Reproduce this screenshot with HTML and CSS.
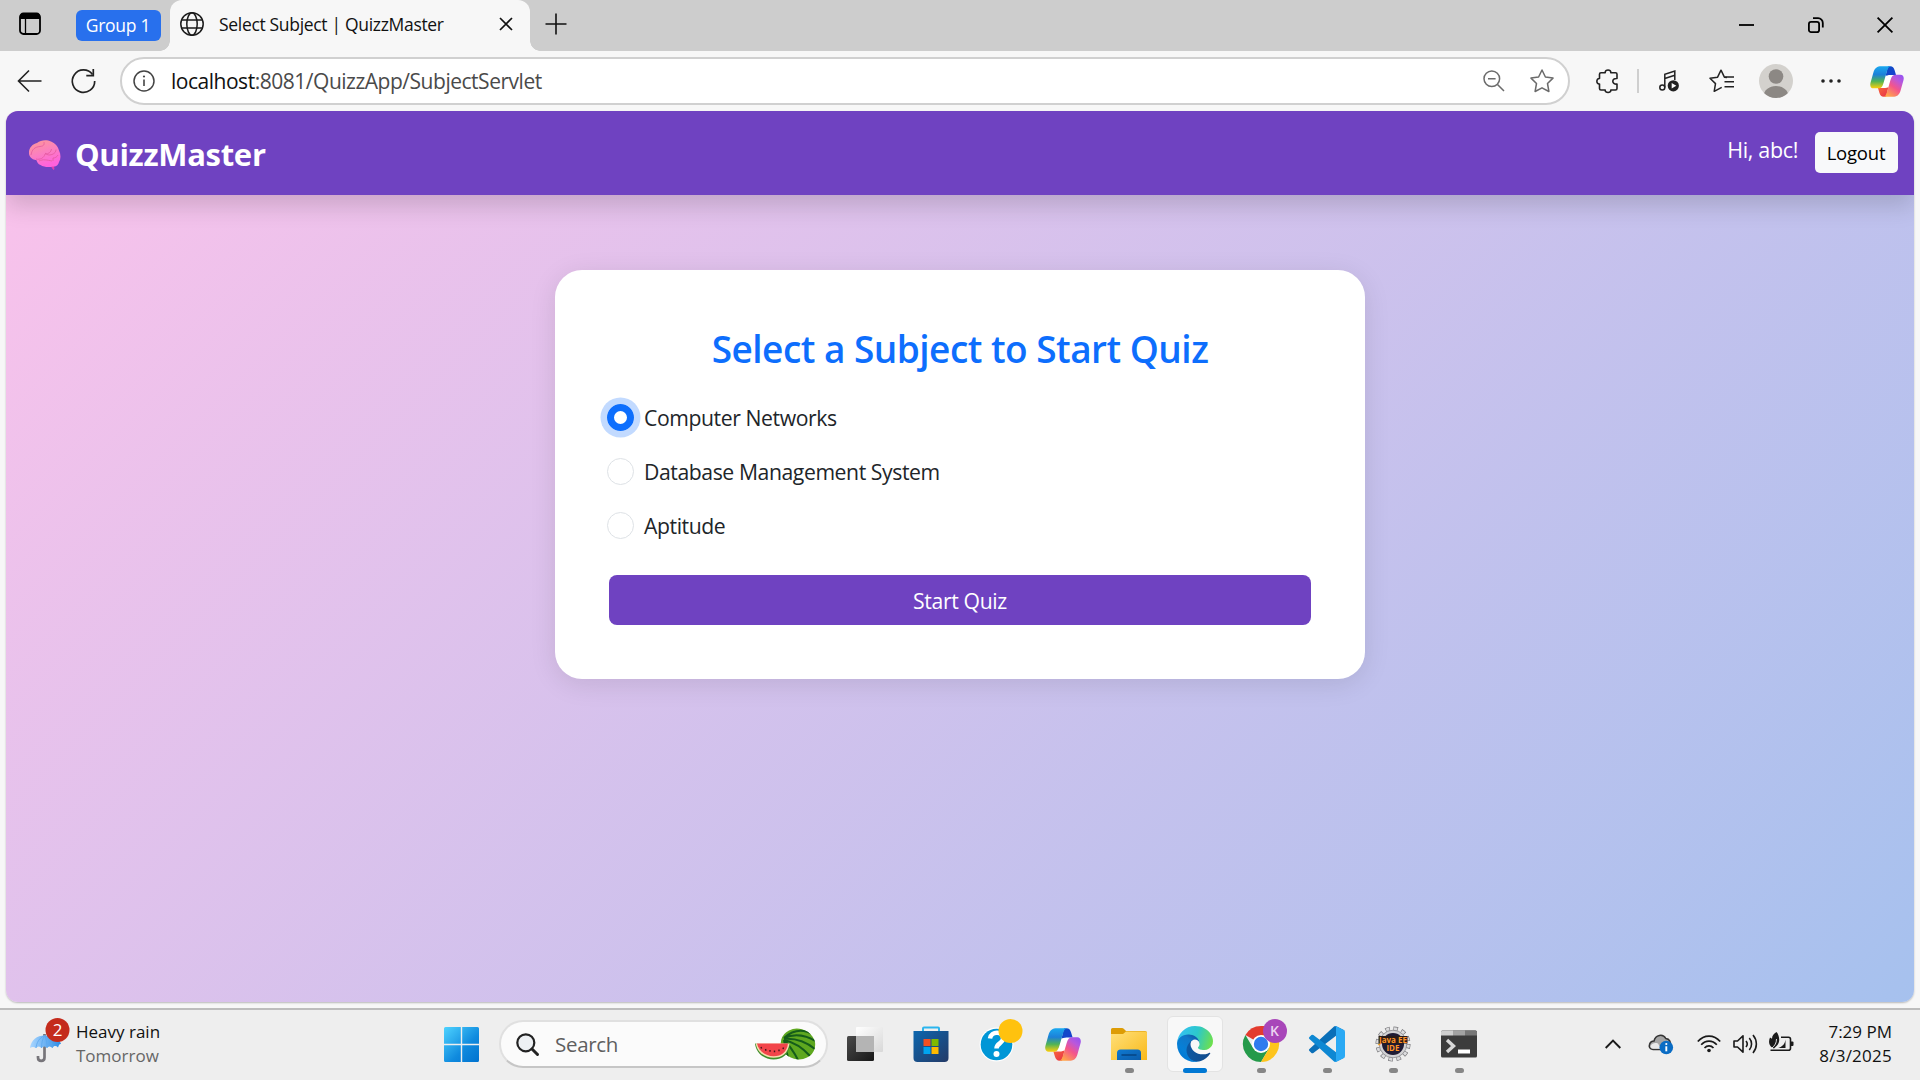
FILE: index.html
```html
<!DOCTYPE html>
<html lang="en">
<head>
<meta charset="utf-8">
<title>Select Subject | QuizzMaster</title>
<link rel="stylesheet" href="styles.css">
</head>
<body>
<svg class="defs" width="0" height="0" aria-hidden="true">
  <defs>
    <linearGradient id="cpA" x1="0" y1="0" x2="0" y2="1"><stop offset="0" stop-color="#1aa9f0"/><stop offset=".38" stop-color="#1d80d8"/><stop offset=".68" stop-color="#4fb356"/><stop offset="1" stop-color="#ffcf0a"/></linearGradient>
    <linearGradient id="cpB" x1="1" y1="0" x2=".3" y2="1"><stop offset="0" stop-color="#8e52f5"/><stop offset=".3" stop-color="#b858dd"/><stop offset=".6" stop-color="#f4558b"/><stop offset="1" stop-color="#ffa64a"/></linearGradient>
    <linearGradient id="cpC" x1="0" y1="0" x2="1" y2="1"><stop offset="0" stop-color="#0b4fc4"/><stop offset="1" stop-color="#1b3fd0"/></linearGradient>
    <linearGradient id="cpD" x1="0" y1="0" x2="1" y2="1"><stop offset="0" stop-color="#f8683c"/><stop offset="1" stop-color="#e8304a"/></linearGradient>
  </defs>
  <symbol id="copilot" viewBox="0 0 36 33">
    <path fill="#fff" d="M17 9h7l-5 15h-7z"/>
    <path fill="url(#cpC)" d="M19 .2h2.500c2.500 0 3.800 1.600 4.600 4.200L27.600 9.500H23c-2 0-4 0-6.500 1z"/>
    <path fill="url(#cpD)" d="M17 32.800h-2.500c-2.500 0-3.800-1.600-4.600-4.200L8.400 23.500H13c2 0 4 0 6.500-1z"/>
    <path fill="url(#cpA)" d="M12 .2h10.200c-2.400.3-3.300 2-4.200 5.200L14.300 18c-1.200 4-2.600 5.800-6 5.800H3.800C.6 23.800-.3 21 .4 18L3.600 6.600C5 2 7.500.2 12 .2z"/>
    <path fill="url(#cpB)" d="M24 32.800H13.800c2.400-.3 3.300-2 4.200-5.200L21.700 15c1.200-4 2.600-5.800 6-5.800h4.500c3.200 0 4.100 2.800 3.400 5.800l-3.200 11.400C31 31 28.500 32.800 24 32.800z"/>
  </symbol>
</svg>

<header class="tabstrip">
  <svg class="ic-workspace" width="22" height="24" viewBox="0 0 22 24"><rect x="1" y="1.500" width="20" height="20.500" rx="3.500" fill="none" stroke="#000" stroke-width="1.800"/><path d="M1 7V5a4 4 0 0 1 4-4h12a4 4 0 0 1 4 4v2z"/><path d="M6.500 7v15" stroke="#000" stroke-width="1.300"/></svg>
  <span class="group">Group 1</span>
  <div class="tab">
    <svg width="24" height="26" viewBox="0 0 24 26" fill="none" stroke="#1b1b1b" stroke-width="1.500"><circle cx="12" cy="13" r="11.200"/><ellipse cx="12" cy="13" rx="5.200" ry="11.200"/><path d="M1.800 9h20.400M1.800 17h20.400"/></svg>
    <span class="tab-title">Select Subject | QuizzMaster</span>
    <svg width="14" height="14" viewBox="0 0 14 14" stroke="#111" stroke-width="1.700"><path d="M1 1l12 12M13 1L1 13"/></svg>
  </div>
  <svg class="ic-plus" width="22" height="22" viewBox="0 0 22 22" stroke="#111" stroke-width="1.600"><path d="M11 .5v21M.5 11h21"/></svg>
  <div class="winctl">
    <svg width="15" height="16" viewBox="0 0 15 16"><path d="M0 8h15" stroke="#000" stroke-width="1.800"/></svg>
    <svg width="16" height="16" viewBox="0 0 16 16" fill="none" stroke="#000" stroke-width="1.800"><rect x=".9" y="4.900" width="10.200" height="10.200" rx="2.200"/><path d="M5 1.200h5A4.700 4.700 0 0 1 14.800 6v4.500"/></svg>
    <svg width="16" height="16" viewBox="0 0 16 16" stroke="#000" stroke-width="1.800"><path d="M.6.600l14.800 14.800M15.400.600L.6 15.400"/></svg>
  </div>
</header>

<nav class="toolbar">
  <svg class="ic-back" width="25" height="24" viewBox="0 0 25 24" fill="none" stroke="#222" stroke-width="1.600"><path d="M12 1.500L1.500 12 12 22.500M1.500 12H24.500"/></svg>
  <svg class="ic-reload" width="25" height="26" viewBox="0 0 25 26" fill="none" stroke="#222" stroke-width="1.700"><path d="M21.500 6.500A11.200 11.200 0 1 0 23.700 13"/><path d="M22.300 1v6.700h-7"/></svg>
  <div class="address">
    <svg class="ic-info" width="22" height="22" viewBox="0 0 22 22"><circle cx="11" cy="11" r="10" fill="none" stroke="#444" stroke-width="1.500"/><path d="M11 9.500v6.500" stroke="#444" stroke-width="1.600"/><circle cx="11" cy="6.500" r="1.100" fill="#444"/></svg>
    <span class="url"><b>localhost</b>:8081/QuizzApp/SubjectServlet</span>
    <svg class="ic-zoom" width="22" height="22" viewBox="0 0 22 22" fill="none" stroke="#6b6b6b" stroke-width="1.500"><circle cx="8.800" cy="8.800" r="7.800"/><path d="M14.500 14.500l6.500 6.500M5 8.800h7.600"/></svg>
    <svg class="ic-star" width="24" height="24" viewBox="0 0 24 24" fill="none" stroke="#6b6b6b" stroke-width="1.500" stroke-linejoin="round"><path d="M12 1l3.400 7 7.600 1.100-5.500 5.400 1.400 8-6.900-3.700-6.900 3.700 1.400-8L1 9.100 8.600 8z"/></svg>
  </div>
  <svg class="ic-puzzle" width="23" height="24" viewBox="0 0 23 24" fill="none" stroke="#222" stroke-width="1.600" stroke-linejoin="round"><path d="M5 3.800h4.200C8.800.1 15.300.1 14.800 3.800h4.700q1.500 0 1.500 1.500v4.200c-5.600-.6-5.600 6.200 0 5.600v4.400q0 1.500-1.500 1.500h-4.700c.5 3.300-6 3.300-5.600 0H5q-1.500 0-1.500-1.500v-4.400c-3.500.4-3.500-6 0-5.600V5.300q0-1.500 1.500-1.500z"/></svg>
  <span class="sep"></span>
  <svg class="ic-music" width="20" height="22" viewBox="0 0 20 22" fill="none" stroke="#222" stroke-width="1.500"><circle cx="3.300" cy="17.500" r="2.500"/><path d="M5.800 17.500V4.200l10-3.200v9M5.800 8.500l10-3.200"/><circle cx="14.300" cy="15.800" r="5.600" fill="#222" stroke="none"/><path d="M12.700 13v5.600l4.600-2.800z" fill="#fff" stroke="none"/></svg>
  <svg class="ic-favs" width="25" height="24" viewBox="0 0 25 24" fill="none" stroke="#222" stroke-width="1.500" stroke-linejoin="round"><path d="M18 8.500l-2.600-.3L12 1.200 8.600 8.200 1 9.300l5.500 5.300-1.300 7.700 7.500-4"/><path d="M15.500 12.700H25M15.500 17.700H25M16 7.900H25"/></svg>
  <svg class="ic-avatar" width="34" height="34" viewBox="0 0 34 34"><clipPath id="av"><circle cx="17" cy="17" r="17"/></clipPath><circle cx="17" cy="17" r="17" fill="#d3d1cd"/><circle cx="17" cy="12.500" r="7.300" fill="#8c8884"/><ellipse cx="17" cy="32.500" rx="12.500" ry="10.500" fill="#8c8884" clip-path="url(#av)"/></svg>
  <svg class="ic-dots" width="20" height="6" viewBox="0 0 20 6" fill="#222"><circle cx="2" cy="3" r="1.800"/><circle cx="10" cy="3" r="1.800"/><circle cx="18" cy="3" r="1.800"/></svg>
  <svg class="ic-copilot" width="34" height="31"><use href="#copilot"/></svg>
</nav>

<div class="viewport">
  <main class="page">
    <div class="navbar">
      <svg class="brain" width="34" height="30" viewBox="0 0 34 30">
        <defs><linearGradient id="br" x1="0" y1="0" x2=".4" y2="1"><stop offset="0" stop-color="#ff9a94"/><stop offset=".55" stop-color="#fb7fc0"/><stop offset="1" stop-color="#ff62dc"/></linearGradient></defs>
        <path d="M22 24c1 2 1.500 4 3.500 6l1-1c-.5-2-.3-3 .5-4.500z" fill="#e03fb0"/>
        <path d="M9 3C13-.3 19-.3 23 1.500c4 1.500 7 5 8 9 2 4 2 8.500 0 11.500-.5 3-3 5-6 4.500-4 1-9 .8-12.500-1.500-2.500-1-3.500-3-4-4.800C3 19.500.5 16 1 11.500 1.500 7.500 4.500 4 9 3z" fill="url(#br)"/>
        <path d="M3 15c1-6 4-8 9-8.500s4-3 4-4.500M8 19c4 1 8-1 9-5 4 0 6-2 6.500-5M17 13c2 2 4 2.500 7 1.500s4-3 4-5M11 21c4-2 8-1 13 0M25 21v-3c2 0 4-1 5-3" fill="none" stroke="#e3589c" stroke-width="1" opacity=".75"/>
      </svg>
      <span class="brand">QuizzMaster</span>
      <span class="hello">Hi, abc!</span>
      <button class="logout">Logout</button>
    </div>
    <form class="card">
      <h3>Select a Subject to Start Quiz</h3>
      <label class="option"><i class="radio on"></i>Computer Networks</label>
      <label class="option"><i class="radio"></i>Database Management System</label>
      <label class="option"><i class="radio"></i>Aptitude</label>
      <button class="start" type="button">Start Quiz</button>
    </form>
  </main>
</div>

<footer class="taskbar">
  <div class="weather">
    <svg width="42" height="46" viewBox="0 0 42 46">
      <defs><linearGradient id="um" x1="0" y1="0" x2="1" y2="0"><stop offset="0" stop-color="#a9d6ff"/><stop offset="1" stop-color="#2b8ce6"/></linearGradient></defs>
      <path d="M16.500 16v3M16.500 28v11.500c0 4.500-6.500 4.500-6.500 0v-1.500" fill="none" stroke="#77757a" stroke-width="2.700"/>
      <path d="M2 30C3 22 9 17.500 16.500 17.500S32 21 33 26c-1.300-.5-2 .5-3 3.500-2-2-4-2-5.500.5-2-2-4-2-5.500 0-1.700-2-3.600-2-5.500 0-1.800-2-3.800-2-5.500 0C6 28.500 4 28.500 2 30z" fill="url(#um)"/>
      <path d="M8 30c.5-5 3-10 8.500-12.500M13.500 30c0-5 1-9 3-12.500M19 30c0-5-.5-9-2.500-12.500M24.500 30c-.5-5-2.500-10-8-12.500" fill="none" stroke="#5aa6ee" stroke-width=".8"/>
      <circle cx="29.500" cy="12" r="12" fill="#c42b1c"/>
      <text x="29.500" y="18" text-anchor="middle" fill="#fff" class="badge-num">2</text>
    </svg>
    <div class="weather-text"><span>Heavy rain</span><span class="dim">Tomorrow</span></div>
  </div>

  <svg class="winlogo" width="35" height="35" viewBox="0 0 35 35">
    <defs><linearGradient id="wl" x1="0" y1="0" x2="1" y2="1" gradientUnits="userSpaceOnUse" gradientTransform="scale(35)"><stop offset="0" stop-color="#4ed3ff"/><stop offset=".6" stop-color="#0f8ade"/><stop offset="1" stop-color="#0072cf"/></linearGradient></defs>
    <path fill="url(#wl)" d="M1.500 0H16.800V16.800H0V1.500Q0 0 1.500 0zM18.200 0h15.300Q35 0 35 1.500V16.800H18.200zM0 18.200H16.800V35H1.500Q0 35 0 33.500zM18.200 18.200H35V33.500Q35 35 33.500 35H18.200z"/>
  </svg>

  <div class="search">
    <svg width="23" height="23" viewBox="0 0 23 23"><circle cx="9.800" cy="9.800" r="8.500" fill="#eef1f4" stroke="#222" stroke-width="2.200"/><path d="M16 16l5.500 5.500" stroke="#222" stroke-width="3" stroke-linecap="round"/></svg>
    <span class="search-text">Search</span>
    <svg class="melon" width="61" height="32" viewBox="0 0 61 32">
      <defs><clipPath id="ml"><ellipse cx="43" cy="16" rx="17.300" ry="15.300" transform="rotate(15 43 16)"/></clipPath></defs>
      <g clip-path="url(#ml)"><rect width="61" height="32" fill="#5ea81f"/><path d="M29 10c10-9 20-9 30-3M29 10c11-5 22-3 33 4M29 11c12-1 22 3 31 10M29 12c9 2 18 7 26 16M29 12c5 5 9 10 14 20M29 12c1 6 2 12 5 20" fill="none" stroke="#155d1a" stroke-width="2"/></g>
      <path d="M0 15.500c7 1.500 27 1.500 35 1C34 26 28 31.500 18.500 31.500S1 25 0 15.500z" fill="#3f8f2c"/>
      <path d="M.8 15.500h33.800C33 25 27.500 29.800 18.500 29.800S2 24 .8 15.500z" fill="#f6dcae"/>
      <path d="M2 15.500h31C32 24 26.500 28.200 18.500 28.200S3.500 23 2 15.500z" fill="#f2444a"/>
      <path d="M6 19l.6 1.500M10.500 21l.5 1.700M15 22v1.800M19.500 22.500v1.800M24 21.500v1.700M28.500 19.500l-.5 1.600" stroke="#43161a" stroke-width="1.400"/>
    </svg>
  </div>

  <div class="apps">
    <div class="app">
      <svg width="36" height="36" viewBox="0 0 36 36"><defs><linearGradient id="tv" x1="0" y1="0" x2="1" y2="1"><stop offset="0" stop-color="#4a4a4a"/><stop offset="1" stop-color="#181818"/></linearGradient><linearGradient id="tw" x1="0" y1="0" x2="1" y2="1"><stop offset="0" stop-color="#fff"/><stop offset="1" stop-color="#d8d8d8"/></linearGradient></defs><rect y="10" width="27" height="25" rx="1.500" fill="url(#tv)"/><rect x="9" y="1" width="27" height="25" rx="1" fill="url(#tw)"/><path d="M9 10h18v16H9z" fill="#b4b4b4"/></svg>
    </div>
    <div class="app">
      <svg width="36" height="36" viewBox="0 0 36 36"><defs><linearGradient id="st" x1="0" y1="0" x2="1" y2="1"><stop offset="0" stop-color="#0c66ae"/><stop offset="1" stop-color="#243a67"/></linearGradient></defs><path d="M10 6V2.500Q10 1.500 11 1.500H25Q26 1.500 26 2.500V6" fill="none" stroke="#2bb5ee" stroke-width="2"/><path d="M.5 5H35.500V32Q35.500 36 31.500 36H4.500Q.5 36 .5 32z" fill="url(#st)"/><path d="M10.500 13h7v7h-7z" fill="#f25022"/><path d="M18.500 13h7v7h-7z" fill="#7fba00"/><path d="M10.500 21h7v7h-7z" fill="#00a4ef"/><path d="M18.500 21h7v7h-7z" fill="#ffb900"/></svg>
    </div>
    <div class="app">
      <svg class="tall" width="44" height="44" viewBox="0 0 44 44"><circle cx="17.500" cy="26.500" r="17" fill="#fff"/><circle cx="17.500" cy="26.500" r="15.800" fill="#0096d6"/><path d="M11 20.500c1-8 14-7.500 13 .5-.6 4.500-6.500 4.500-6.500 9.500" fill="none" stroke="#fff" stroke-width="4.500"/><circle cx="17.500" cy="36" r="3" fill="#fff"/><circle cx="31.500" cy="13" r="12" fill="#ffc20e"/></svg>
    </div>
    <div class="app"><svg width="36" height="33"><use href="#copilot"/></svg></div>
    <div class="app open">
      <svg width="36" height="34" viewBox="0 0 36 34"><defs><linearGradient id="fo" x1="0" y1="0" x2="1" y2="1"><stop offset="0" stop-color="#ffe07a"/><stop offset="1" stop-color="#f9b91a"/></linearGradient><linearGradient id="fb" x1="0" y1="0" x2="1" y2="1"><stop offset="0" stop-color="#0f7ad1"/><stop offset="1" stop-color="#0b5cab"/></linearGradient></defs><path d="M0 8V2.500Q0 1 1.500 1H11q1 0 2 1l2 2H34q2 0 2 2v2z" fill="#dd9c05"/><path d="M0 7H12l3-2.500H34.500Q36 4.500 36 6V33H0z" fill="url(#fo)"/><path d="M6 33V26q0-3.500 3.500-3.500h17Q30 22.500 30 26v7z" fill="url(#fb)"/><path d="M10.500 28h15" stroke="#07488a" stroke-width="1.700"/></svg>
    </div>
    <div class="app open active">
      <svg width="36" height="36" viewBox="4.630 4.920 256 256">
        <defs><linearGradient id="e1" x1="63" y1="177" x2="241" y2="177" gradientUnits="userSpaceOnUse"><stop offset="0" stop-color="#0c59a4"/><stop offset="1" stop-color="#114a8b"/></linearGradient>
        <linearGradient id="e2" x1="157" y1="90" x2="46" y2="240" gradientUnits="userSpaceOnUse"><stop offset="0" stop-color="#0f5aa8"/><stop offset=".25" stop-color="#1177c8"/><stop offset=".7" stop-color="#0680d7"/><stop offset="1" stop-color="#0078d4"/></linearGradient>
        <linearGradient id="e3" x1="20" y1="60" x2="255" y2="130" gradientUnits="userSpaceOnUse"><stop offset="0" stop-color="#35c1f1"/><stop offset=".5" stop-color="#2cc8cb"/><stop offset="1" stop-color="#6fe04a"/></linearGradient></defs>
        <path fill="url(#e1)" d="M235.680 195.460a93.730 93.730 0 0 1-10.540 4.710 101.870 101.870 0 0 1-35.900 6.460c-47.320 0-88.540-32.550-88.540-74.320A31.480 31.480 0 0 1 117.130 105c-42.800 1.800-53.800 46.400-53.800 72.530 0 73.880 68.090 81.370 82.760 81.370 7.910 0 19.840-2.300 27-4.560l1.310-.44A128.340 128.340 0 0 0 241 201.100a4 4 0 0 0-5.320-5.640z"/>
        <path fill="url(#e2)" d="M110.340 246.340A79.200 79.200 0 0 1 87.600 225a80.720 80.720 0 0 1 29.530-120c3.120-1.470 8.450-4.130 15.540-4a32.350 32.350 0 0 1 25.690 13 31.880 31.880 0 0 1 6.360 18.660c0-.21 24.460-79.600-80-79.600-43.900 0-80 41.660-80 78.210a130.150 130.150 0 0 0 12.110 56 128 128 0 0 0 156.380 67.110 75.550 75.550 0 0 1-62.870-8.040z"/>
        <path fill="url(#e3)" d="M156.940 153.780c-.81 1.050-3.300 2.500-3.300 5.660 0 2.610 1.700 5.120 4.720 7.230 14.380 10 41.490 8.680 41.560 8.680A59.560 59.560 0 0 0 230.190 167a61.380 61.380 0 0 0 30.430-52.880c.26-22.410-8-37.310-11.340-43.910C228.100 28.760 182.350 4.920 132.610 4.920A128 128 0 0 0 4.630 131.120c.48-36.540 36.800-66.050 80-66.050 3.500 0 23.460.34 42 10.070 16.340 8.580 24.900 18.940 30.850 29.210 6.180 10.670 7.280 24.150 7.280 29.520s-2.740 13.330-7.820 19.910z"/>
      </svg>
    </div>
    <div class="app open">
      <svg class="tall" width="44" height="44" viewBox="0 0 44 44">
        <path d="M18 26L2.400 17A18 18 0 0 1 33.600 17z" fill="#e33b2e"/><path d="M18 8a18 18 0 0 1 15.600 9H18z" fill="#e33b2e"/>
        <path d="M18 26l8 4.500L18 44A18 18 0 0 1 2.400 17l8 13.500z" fill="#249a4a"/>
        <path d="M18 17h15.600A18 18 0 0 1 18 44l8-13.500z" fill="#fdc41d"/>
        <circle cx="18" cy="26" r="9" fill="#fff"/><circle cx="18" cy="26" r="7.200" fill="#2f7bee"/>
        <circle cx="32" cy="13" r="12" fill="#a846b9"/><text x="31.500" y="18" text-anchor="middle" fill="#ecd3f0" class="k">K</text>
      </svg>
    </div>
    <div class="app open">
      <svg width="36" height="36" viewBox="0 0 100 100"><path fill="#0a6fb8" d="M96.460 10.800L75.860.880a6.230 6.230 0 0 0-7.110 1.200L1.300 63.580a4.170 4.170 0 0 0 0 6.160l5.510 5.010a4.170 4.170 0 0 0 5.320.24l81.230-61.620c2.720-2.070 6.640-.12 6.640 3.300v-.24a6.250 6.250 0 0 0-3.540-5.630z"/><path fill="#0e88d3" d="M96.460 89.200l-20.600 9.920a6.230 6.230 0 0 1-7.110-1.210L1.300 36.420a4.170 4.170 0 0 1 0-6.160l5.510-5.010a4.170 4.170 0 0 1 5.320-.24l81.230 61.620c2.720 2.070 6.640.12 6.640-3.300v.24a6.250 6.250 0 0 1-3.540 5.630z"/><path fill="#2aa9f4" d="M75.860 99.130a6.230 6.230 0 0 1-7.110-1.210c2.310 2.300 6.250.670 6.250-2.590V4.670c0-3.260-3.940-4.890-6.250-2.590a6.230 6.230 0 0 1 7.110-1.210l20.600 9.910A6.250 6.250 0 0 1 100 16.410v67.180a6.250 6.250 0 0 1-3.540 5.630z"/></svg>
    </div>
    <div class="app open">
      <svg width="36" height="36" viewBox="0 0 36 36"><circle cx="18" cy="18" r="15.300" fill="none" stroke="#77777a" stroke-width="4.500" stroke-dasharray="4.400 3.611"/><circle cx="18" cy="18" r="15.300" fill="none" stroke="#dcdcde" stroke-width="3.200" stroke-dasharray="3.200 4.811" stroke-dashoffset="-.6"/><circle cx="18" cy="18" r="13.800" fill="#d2d2d4" stroke="#8b8b8e" stroke-width=".8"/><circle cx="18" cy="18" r="11" fill="#1f1b33"/><path d="M3.500 10h29v7.500h-29z" fill="#2a1c18"/><text x="18" y="16.700" text-anchor="middle" class="ide" textLength="28" lengthAdjust="spacingAndGlyphs">Java EE</text><text x="18" y="24.500" text-anchor="middle" class="ide">IDE</text></svg>
    </div>
    <div class="app open">
      <svg width="36" height="28" viewBox="0 0 36 28"><rect y=".5" width="36" height="27" rx="1.500" fill="#3c3c3c"/><path d="M1.500.500H12V5.500H0V2Q0 .5 1.500.500z" fill="#cfcfcf"/><path d="M12 .5h12v5H12z" fill="#a3a3a3"/><path d="M24 .5h10.500q1.500 0 1.500 1.500v3.500H24z" fill="#777"/><path d="M6 10l6.500 6L6 22" fill="none" stroke="#d8d8d8" stroke-width="3.400"/><path d="M17 21.500h12" stroke="#fff" stroke-width="4"/></svg>
    </div>
  </div>

  <div class="tray">
    <svg class="ic-chev" width="16" height="10" viewBox="0 0 16 10" fill="none" stroke="#1a1a1a" stroke-width="1.900"><path d="M.7 9L8 1.500 15.300 9"/></svg>
    <svg class="ic-cloud" width="26" height="22" viewBox="0 0 26 22"><path d="M5 16.500C1.500 16.500.8 13.500 1.500 11.500 2.200 9 4 8 6 8 7.500 1.500 15 .5 17.800 5.500c4 .5 5 3.500 4.500 6.500L14 16.500z" fill="#a5a5a5" stroke="#333" stroke-width="1.500"/><path d="M2.500 13c1.500-3 4.500-3.500 7.500-2.500l3 5.200H5.500c-2 0-3-1-3-2.700z" fill="#e9e9e9"/><circle cx="18.300" cy="14.500" r="6.800" fill="#0a6cc4"/><path d="M18.300 13.300v5" stroke="#fff" stroke-width="1.900"/><circle cx="18.300" cy="11" r="1.100" fill="#fff"/></svg>
    <svg class="ic-wifi" width="24" height="18" viewBox="0 0 24 18" fill="none" stroke="#1a1a1a" stroke-width="1.700"><path d="M.8 6.500C7-.8 17-.8 23.200 6.500M4.200 9.800c4.300-5 11.300-5 15.600 0M7.500 13c2.500-2.800 6.500-2.800 9 0"/><circle cx="12" cy="15.500" r="1.800" fill="#1a1a1a" stroke="none"/></svg>
    <svg class="ic-vol" width="25" height="20" viewBox="0 0 25 20" fill="none" stroke="#1a1a1a" stroke-width="1.600" stroke-linejoin="round"><path d="M1 7h3.500L10 1.800v16.400L4.500 13H1z"/><path d="M13 7c1.500 1.800 1.500 4.200 0 6M16.300 4c3 3.500 3 8.500 0 12M20 1c4.500 5.500 4.500 12.500 0 18"/></svg>
    <svg class="ic-bat" width="25" height="21" viewBox="0 0 25 21"><path d="M12 5.200h7.500q2 0 2 2v9q0 2-2 2H1.500" fill="none" stroke="#1a1a1a" stroke-width="1.600"/><path d="M22 9.500h1.500q1 0 1 1v2.500q0 1-1 1H22z" fill="#1a1a1a"/><path d="M16.500 7.500v8.500H9c4.500-1.500 7-4 7.500-8.500z" fill="#1a1a1a"/><path d="M7.500 0c3 3.500 4 10 .5 13.500L5 16.500 3 15.500C-.8 13-.3 8.500 1 5.500l2 1.300C3 3.500 5 1.500 7.500 0z" fill="#1a1a1a"/><path d="M7.500 7c0 4-1.500 6.500-5 9.500" stroke="#eee" stroke-width=".9" fill="none"/></svg>
    <div class="clock"><span>7:29 PM</span><span class="date">8/3/2025</span></div>
  </div>
</footer>
</body>
</html>
```
FILE: styles.css
```css
* { box-sizing: border-box; }
html, body { margin: 0; height: 100%; overflow: hidden; }
body {
  display: flex;
  flex-direction: column;
  width: 1920px;
  height: 1080px;
  background: #f7f7f7;
  color: #111;
  font-family: "Open Sans", "Noto Sans", sans-serif;
  white-space: nowrap;
}
svg { display: block; flex: none; overflow: visible; }
.defs { position: absolute; }

/* tab strip */
.tabstrip { display: flex; align-items: center; height: 51px; flex: none; background: #cdcdcd; padding-left: 19px; }
.ic-workspace { margin-top: -3px; }
.group {
  display: flex; align-items: center; justify-content: center;
  width: 85px; height: 31px; margin-left: 35px;
  border-radius: 6px; background: #2870ed; color: #fff;
  font-size: 17.500px; letter-spacing: -.3px; line-height: 28px; padding: 0 1px 1px 0;
}
.tab {
  position: relative;
  display: flex; align-items: center;
  width: 360px; height: 51px; margin-left: 9px; padding: 0 17px 4px 10px;
  border-radius: 12px 12px 0 0; background: #f7f7f7;
}
.tab::before, .tab::after {
  content: ""; position: absolute; bottom: 0; width: 10px; height: 10px;
}
.tab::before { left: -10px; background: radial-gradient(circle at 0 0, #cdcdcd 9.500px, #f7f7f7 10px); }
.tab::after { right: -10px; background: radial-gradient(circle at 100% 0, #cdcdcd 9.500px, #f7f7f7 10px); }
.tab-title { flex: 1; margin-left: 15px; font-size: 17.500px; letter-spacing: -.32px; }
.ic-plus { margin: -4px 0 0 15px; }
.winctl { display: flex; align-items: center; gap: 53.500px; margin: 0 27px 1px auto; }

/* toolbar */
.toolbar { display: flex; align-items: center; height: 60px; flex: none; padding-left: 17px; }
.ic-reload { margin-left: 29px; }
.address {
  display: flex; align-items: center;
  width: 1450px; height: 48px; margin-left: 24px; padding-left: 11px;
  border: 2px solid #d0d0d0; border-radius: 24px; background: #fff;
}
.url { flex: 1; margin-left: 16px; font-size: 21px; letter-spacing: -.48px; color: #4a4a4a; }
.url b { font-weight: 400; color: #111; }
.ic-star { margin: 0 14px 0 25px; }
.ic-puzzle { margin-left: 26px; }
.sep { width: 2px; height: 24px; margin-left: 18px; background: #cfcfcf; }
.ic-music { margin-left: 20px; }
.ic-favs { margin-left: 30px; }
.ic-avatar { margin-left: 25px; }
.ic-dots { margin-left: 28px; }
.ic-copilot { margin-left: 29px; }

/* web page */
.viewport { height: 897px; flex: none; padding: 0 6px; }
.page {
  height: 891px; border-radius: 12px; overflow: hidden;
  background: linear-gradient(135deg, #fbc2eb, #a6c1ee);
  box-shadow: 0 1px 2px rgba(0, 0, 0, .25);
}
.navbar {
  display: flex; align-items: center;
  height: 84px; padding: 0 16px 0 22px;
  background: #6f42c1; color: #fff;
  box-shadow: 0 11px 22px rgba(0, 0, 0, .15);
}
.brain { margin-top: 4px; }
.brand { margin: 2px 0 0 13px; font-size: 31px; font-weight: 700; letter-spacing: -.3px; }
.hello { margin: -8px 0 0 auto; font-size: 21.500px; letter-spacing: -.35px; }
.logout {
  width: 83px; height: 41px; margin: -2px 0 0 17px; padding: 0 1px 0 0;
  border: 0; border-radius: 5px; background: #f8f9fa; color: #000;
  font: 18.500px "Open Sans", sans-serif; letter-spacing: -.2px;
}
.card {
  width: 810px; height: 409px; margin: 75px auto 0; padding: 54px;
  border-radius: 27px; background: #fff;
  box-shadow: 0 5px 27px rgba(0, 0, 0, .1);
}
.card h3 { margin: 0 0 27.500px; font-size: 37px; line-height: 50px; font-weight: 600; letter-spacing: -.52px; text-align: center; color: #0d6efd; }
.option { display: flex; align-items: center; height: 32px; margin-bottom: 22px; font-size: 21.200px; letter-spacing: -.42px; color: #212529; }
.radio { width: 27px; height: 27px; margin: 0 10.500px 0 -2.500px; border: 1.500px solid #dee2e6; border-radius: 50%; }
.radio.on { border: 7.500px solid #0d6efd; box-shadow: 0 0 0 6.500px #c2daff; }
.start {
  display: block; width: 702px; height: 50px; margin-top: 33.500px; padding: 0;
  border: 0; border-radius: 8px; background: #6f42c1; color: #fff;
  font: 21.200px "Open Sans", sans-serif; letter-spacing: -.35px;
}

/* taskbar */
.taskbar { display: flex; align-items: center; height: 72px; flex: none; padding-bottom: 2px; border-top: 2px solid #bdbdbd; background: #eee; }
.weather { display: flex; align-items: center; width: 444px; padding-left: 28px; }
.weather svg { margin-top: -6px; }
.weather-text, .clock { display: flex; flex-direction: column; font-size: 17px; line-height: 24px; }
.weather-text { margin-left: 6px; align-items: flex-start; }
.weather-text .dim { color: #666; }
.search {
  display: flex; align-items: center;
  width: 329px; height: 48px; margin-left: 20px; padding: 0 10px 0 15px;
  border: 2px solid #e0e0e0; border-bottom-color: #c6c6c6; border-radius: 24px; background: #fbfbfb;
}
.search-text { flex: 1; margin-left: 16px; font-size: 20.500px; letter-spacing: -.3px; color: #5f5f5f; }
.apps { display: flex; margin-left: 4px; }
.app {
  position: relative;
  display: flex; align-items: center; justify-content: center;
  width: 66px; height: 56px;
}
.app .tall { margin: -8px 0 0 8px; }
.app.active { z-index: 0; }
.app.active::before {
  content: ""; position: absolute; z-index: -1; inset: 0 5px;
  border-radius: 6px; background: #f8f8f8; border: 1px solid #e3e3e3;
}
.app.open::after {
  content: ""; position: absolute; left: 28.500px; bottom: -1px; width: 9px; height: 5px;
  border-radius: 3px; background: #868686;
}
.app.active::after { left: 21px; width: 24px; background: #0078d4; }
.tray { display: flex; align-items: center; margin-left: auto; padding-right: 28px; }
.ic-cloud { margin-left: 27px; }
.ic-wifi { margin-left: 23px; }
.ic-vol { margin-left: 12px; }
.ic-bat { margin-left: 11px; margin-top: -4px; }
.clock { width: 98px; align-items: flex-end; }
.clock .date { letter-spacing: .25px; }
.badge-num, .k, .ide { font-family: "Open Sans", sans-serif; }
.badge-num { font-size: 17px; }
.k { font-size: 14px; font-weight: 600; }
.ide { font-size: 8px; font-weight: 700; fill: #ff9426; }
```
